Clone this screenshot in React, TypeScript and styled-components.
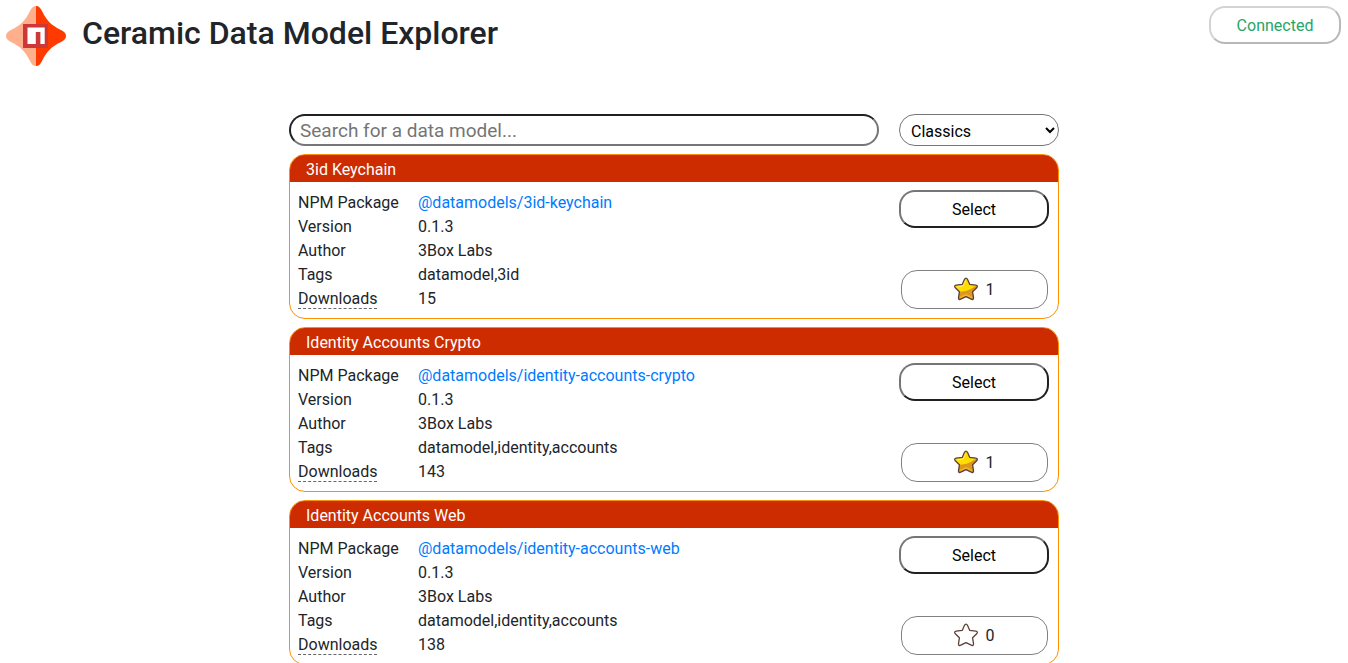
import React, { useState } from "react";
import styled, { createGlobalStyle } from "styled-components";

const GlobalStyle = createGlobalStyle`
  *, *::before, *::after { box-sizing: border-box; }
  html { scrollbar-width: none; }
  body {
    margin: 0;
    background: #fff;
    color: #212529;
    font: 400 16px/24px Roboto, sans-serif;
  }
  button, input, select { font-family: inherit; margin: 0; }
`;

const Header = styled.header`
  display: flex;
  align-items: flex-start;
  padding: 6px 7px 0 6px;
`;

const Title = styled.h1`
  flex: 1;
  margin: 8px 0 0 16px;
  font-size: 32px;
  line-height: 38px;
  font-weight: 500;
`;

const PillButton = styled.button<{ $width: number }>`
  width: ${(p) => p.$width}px;
  height: 38px;
  padding: 2px 0 0;
  border: 2px solid;
  border-color: #767676 #212121 #212121 #767676;
  border-radius: 16px;
  background: #fff;
  color: #000;
  font-size: 16px;
  line-height: 24px;
`;

const ConnectButton = styled(PillButton)`
  border-color: #d3d3d3 #b8b8b8 #b8b8b8 #d3d3d3;
  color: #27a567;
`;

const Main = styled.main`
  max-width: 770px;
  margin: 48px auto 0;
`;

const Filters = styled.form`
  display: flex;
  gap: 20px;
  margin-bottom: 8px;
`;

const SearchInput = styled.input`
  flex: 1;
  min-width: 0;
  height: 32px;
  padding: 0 9px;
  border: 2px solid;
  border-color: #212121 #767676 #767676 #212121;
  border-radius: 16px;
  background: #fff;
  font-size: 19px;
  &::placeholder { color: #757575; }
`;

const CategorySelect = styled.select`
  width: 160px;
  height: 32px;
  padding: 2px 0 0 7px;
  border: 1px solid #767676;
  border-radius: 16px;
  background: #fff;
  color: #000;
  font-size: 16px;
`;

const CardList = styled.div`
  display: flex;
  flex-direction: column;
  gap: 8px;
  padding-bottom: 8px;
`;

const Card = styled.article`
  border: 1px solid #ff9100;
  border-radius: 16px;
  overflow: hidden;
`;

const CardTitle = styled.h2`
  margin: 0;
  padding: 3px 16px 0;
  background: #cc2c00;
  color: #fff;
  font-size: 16px;
  line-height: 24px;
  font-weight: 400;
`;

const CardBody = styled.div`
  display: flex;
  justify-content: space-between;
  padding: 8px 9px 7px 8px;
`;

const Details = styled.dl`
  display: grid;
  grid-template-columns: 120px 1fr;
  margin: 0;
  padding-top: 1px;
`;

const Label = styled.dt`
  font-weight: 400;
`;

const Value = styled.dd`
  margin: 0;
`;

const Hint = styled.span`
  border-bottom: 1px dashed #666;
`;

const PackageLink = styled.a`
  color: #007bff;
  text-decoration: none;
`;

const Actions = styled.div`
  display: flex;
  flex-direction: column;
  align-items: center;
  justify-content: space-between;
  padding-bottom: 2px;
`;

const RateButton = styled.button`
  display: flex;
  align-items: center;
  justify-content: center;
  gap: 8px;
  width: 147px;
  height: 39px;
  padding: 0;
  border: 1px solid #808080;
  border-radius: 16px;
  background: #fff;
  color: #212529;
  font-size: 16px;
  line-height: 24px;
`;

const StarSvg = styled.svg`
  overflow: visible;
`;

const STAR =
  "M12 1.2C12.8 1.2 13.2 1.8 13.6 2.6L15.8 7.4L21.8 8.2C23.6 8.5 23.8 9.7 22.7 10.7L18.6 14.8L19.5 20.6C19.7 22.4 18.6 22.9 17.3 22.2L12 19.6L6.7 22.2C5.4 22.9 4.3 22.4 4.5 20.6L5.4 14.8L1.3 10.7C0.2 9.7 0.4 8.5 2.2 8.2L8.2 7.4L10.4 2.6C10.8 1.8 11.2 1.2 12 1.2Z";

function Star({ filled, id }: { filled: boolean; id: string }) {
  return (
    <StarSvg width="24" height="24" viewBox="0 1 24 24" aria-hidden="true">
      <defs>
        <linearGradient id={`${id}-top`} x1="0" y1="0" x2="0" y2="1">
          <stop offset="0" stopColor="#ffd500" />
          <stop offset="0.6" stopColor="#ffe000" />
          <stop offset="1" stopColor="#f5c211" />
        </linearGradient>
        <clipPath id={`${id}-clip`}>
          <path d={STAR} />
        </clipPath>
      </defs>
      {filled && (
        <g clipPath={`url(#${id}-clip)`}>
          <rect width="24" height="24" fill={`url(#${id}-top)`} />
          <path d="M0 14.5C6 15.5 14 14.5 20 10L24 8V24H0Z" fill="#dc971c" />
          <path d="M3 10L8.8 9L12 3.5" fill="none" stroke="#fff06a" strokeWidth="1" />
          <path d="M6 21L12 18L18 21" fill="none" stroke="#f0b52c" strokeWidth="2" />
        </g>
      )}
      <path d={STAR} fill="none" stroke="#5d4037" strokeWidth="1.3" strokeLinejoin="round" />
    </StarSvg>
  );
}

interface Model {
  id: string;
  title: string;
  version: string;
  author: string;
  tags: string;
  downloads: number;
  stars: number;
}

const MODELS: Model[] = [
  { id: "3id-keychain", title: "3id Keychain", version: "0.1.3", author: "3Box Labs", tags: "datamodel,3id", downloads: 15, stars: 1 },
  { id: "identity-accounts-crypto", title: "Identity Accounts Crypto", version: "0.1.3", author: "3Box Labs", tags: "datamodel,identity,accounts", downloads: 143, stars: 1 },
  { id: "identity-accounts-web", title: "Identity Accounts Web", version: "0.1.3", author: "3Box Labs", tags: "datamodel,identity,accounts", downloads: 138, stars: 0 },
];

function Logo() {
  return (
    <svg width="60" height="60" viewBox="0 0 60 60" role="img" aria-label="Ceramic">
      <path d="M30 0C27 0 25.5 2 24 5C19 15 15 19 5 24C2 25.5 0 27 0 30C0 33 2 34.5 5 36C15 41 19 45 24 55C25.5 58 27 60 30 60Z" fill="#ffaf8c" />
      <path d="M30 0C33 0 34.5 2 36 5C41 15 45 19 55 24C58 25.5 60 27 60 30C60 33 58 34.5 55 36C45 41 41 45 36 55C34.5 58 33 60 30 60Z" fill="#ff3a00" />
      <path d="M17 18H42V42H17Z" fill="#cb3837" />
      <path d="M21.5 21.5H38.7V38H34.4V26H29.8V38H21.5Z" fill="#fff" />
    </svg>
  );
}

function ModelCard({ model }: { model: Model }) {
  return (
    <Card>
      <CardTitle>{model.title}</CardTitle>
      <CardBody>
        <Details>
          <Label>NPM Package</Label>
          <Value>
            <PackageLink href={`#${model.id}`}>@datamodels/{model.id}</PackageLink>
          </Value>
          <Label>Version</Label>
          <Value>{model.version}</Value>
          <Label>Author</Label>
          <Value>{model.author}</Value>
          <Label>Tags</Label>
          <Value>{model.tags}</Value>
          <Label>
            <Hint>Downloads</Hint>
          </Label>
          <Value>{model.downloads}</Value>
        </Details>
        <Actions>
          <PillButton type="button" $width={150}>Select</PillButton>
          <RateButton type="button">
            <Star filled={model.stars > 0} id={`star-${model.id}`} />
            {model.stars}
          </RateButton>
        </Actions>
      </CardBody>
    </Card>
  );
}

export default function App() {
  const [query, setQuery] = useState("");
  const shown = MODELS.filter((m) => m.title.toLowerCase().includes(query.toLowerCase()));
  return (
    <>
      <GlobalStyle />
      <Header>
        <Logo />
        <Title>Ceramic Data Model Explorer</Title>
        <ConnectButton type="button" $width={132}>Connected</ConnectButton>
      </Header>
      <Main>
        <Filters onSubmit={(e) => e.preventDefault()}>
          <SearchInput
            type="text"
            aria-label="Search for a data model"
            placeholder="Search for a data model..."
            value={query}
            onChange={(e) => setQuery(e.target.value)}
          />
          <CategorySelect aria-label="Category" defaultValue="classics">
            <option value="classics">Classics</option>
          </CategorySelect>
        </Filters>
        <CardList>
          {shown.map((m) => (
            <ModelCard key={m.id} model={m} />
          ))}
        </CardList>
      </Main>
    </>
  );
}
